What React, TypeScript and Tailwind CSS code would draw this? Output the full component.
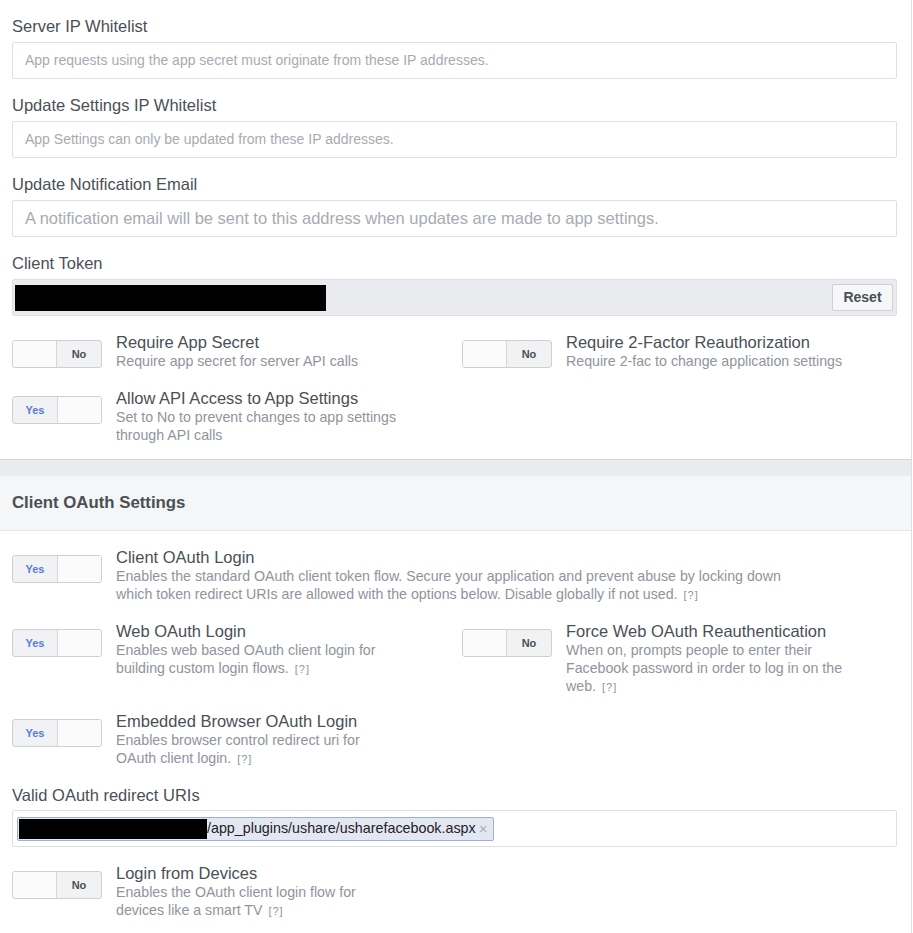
import React from 'react';

type ToggleProps = { on: boolean };

function Toggle({ on }: ToggleProps) {
  return (
    <div className="flex h-[28px] w-[90px] shrink-0 overflow-hidden rounded-[3px] border border-[#ccd0d5] bg-[#f1f2f4]">
      {on ? (
        <>
          <div className="flex w-[44px] items-center justify-center text-[11px] font-bold text-[#5b7bd5]">Yes</div>
          <div className="flex-1 border-l border-[#d3d6db] bg-[#fbfbfc]" />
        </>
      ) : (
        <>
          <div className="w-[44px] border-r border-[#d3d6db] bg-[#fbfbfc]" />
          <div className="flex flex-1 items-center justify-center text-[11px] font-bold text-[#4b4f56]">No</div>
        </>
      )}
    </div>
  );
}

function Help() {
  return <span className="ml-[6px] text-[11px] leading-none tracking-[1px] text-[#90949c]">[?]</span>;
}

interface SwitchRowProps {
  on: boolean;
  title: string;
  desc: React.ReactNode;
  wide?: boolean;
}

function SwitchRow({ on, title, desc, wide }: SwitchRowProps) {
  return (
    <div className="flex items-start">
      <div className="mt-[8px]">
        <Toggle on={on} />
      </div>
      <div className={`ml-[14px] ${wide ? 'w-[700px]' : 'w-[283px]'}`}>
        <div className="whitespace-nowrap text-[16.5px] leading-[20px] text-[#4b4f56]">{title}</div>
        <div className="text-[14.2px] leading-[18px] text-[#90949c]">{desc}</div>
      </div>
    </div>
  );
}

function Field({ label, tight, children }: { label: string; tight?: boolean; children: React.ReactNode }) {
  return (
    <div>
      <div className={`${tight ? 'mb-[5px]' : 'mb-[6px]'} text-[16.5px] leading-[20px] text-[#4b4f56]`}>{label}</div>
      {children}
    </div>
  );
}

function TextBox({ placeholder, big }: { placeholder: string; big?: boolean }) {
  return (
    <div
      className={`flex h-[37px] items-center whitespace-nowrap rounded-[2px] border border-[#dddfe2] bg-white px-3 text-[#a7abb1] ${
        big ? 'text-[16.5px]' : 'text-[14px]'
      }`}
    >
      {placeholder}
    </div>
  );
}

export default function App() {
  return (
    <div className="min-h-[933px] w-[913px] bg-white font-['Liberation_Sans',Arial,sans-serif]">
      <div className="w-[912px] border-r border-[#dddfe2]">
        {/* Advanced security */}
        <div className="flex flex-col gap-[16px] pb-[15px] pl-[12px] pr-[14px] pt-[16px]">
          <Field label="Server IP Whitelist">
            <TextBox placeholder="App requests using the app secret must originate from these IP addresses." />
          </Field>
          <Field label="Update Settings IP Whitelist">
            <TextBox placeholder="App Settings can only be updated from these IP addresses." />
          </Field>
          <Field label="Update Notification Email">
            <TextBox big placeholder="A notification email will be sent to this address when updates are made to app settings." />
          </Field>
          <Field label="Client Token">
            <div className="flex h-[37px] items-center justify-between rounded-[2px] border border-[#dddfe2] bg-[#e9ebee] pl-[2px] pr-[3px]">
              <div className="h-[26px] w-[311px] bg-black" />
              <button className="flex h-[27px] w-[61px] items-center justify-center rounded-[2px] border border-[#ced0d4] bg-[#f6f7f9] text-[14px] font-bold text-[#4b4f56]">
                Reset
              </button>
            </div>
          </Field>

          <div className="flex flex-col gap-[18px]">
            <div className="grid grid-cols-[450px_1fr]">
              <SwitchRow on={false} title="Require App Secret" desc="Require app secret for server API calls" />
              <SwitchRow on={false} title="Require 2-Factor Reauthorization" desc="Require 2-fac to change application settings" />
            </div>
            <SwitchRow
              on
              title="Allow API Access to App Settings"
              desc="Set to No to prevent changes to app settings through API calls"
            />
          </div>
        </div>

        {/* Section header */}
        <div className="h-[17px] border-t border-[#d3d6db] bg-[#e9ebee]" />
        <div className="flex h-[55px] items-center border-b border-[#e5e6e9] bg-[#f5f6f7] px-[12px] text-[16.8px] font-bold text-[#4b4f56]">
          Client OAuth Settings
        </div>

        {/* OAuth settings */}
        <div className="flex flex-col pb-[20px] pl-[12px] pr-[14px] pt-[16px]">
          <SwitchRow
            on
            wide
            title="Client OAuth Login"
            desc={
              <>
                Enables the standard OAuth client token flow. Secure your application and prevent abuse by locking down
                which token redirect URIs are allowed with the options below. Disable globally if not used.
                <Help />
              </>
            }
          />
          <div className="mt-[18px] grid grid-cols-[450px_1fr]">
            <SwitchRow
              on
              title="Web OAuth Login"
              desc={
                <>
                  Enables web based OAuth client login for building custom login flows.
                  <Help />
                </>
              }
            />
            <SwitchRow
              on={false}
              title="Force Web OAuth Reauthentication"
              desc={
                <>
                  When on, prompts people to enter their Facebook password in order to log in on the web.
                  <Help />
                </>
              }
            />
          </div>
          <div className="mt-[16px]">
            <SwitchRow
              on
              title="Embedded Browser OAuth Login"
              desc={
                <>
                  Enables browser control redirect uri for OAuth client login.
                  <Help />
                </>
              }
            />
          </div>
          <div className="mt-[18px]">
            <Field tight label="Valid OAuth redirect URIs">
              <div className="flex h-[37px] items-center rounded-[2px] border border-[#dddfe2] bg-white px-[4px]">
                <div className="flex h-[24px] items-center rounded-[2px] border border-[#9cb0d6] bg-[#e3e7f1] pl-[1px] pr-[6px] text-[14.3px] text-[#1d2129]">
                  <div className="h-[20px] w-[188px] bg-black" />
                  <span>/app_plugins/ushare/usharefacebook.aspx</span>
                  <span className="ml-[3px] text-[15px] leading-none text-[#a9aeb6]">×</span>
                </div>
              </div>
            </Field>
          </div>
          <div className="mt-[16px]">
            <SwitchRow
              on={false}
              title="Login from Devices"
              desc={
                <>
                  Enables the OAuth client login flow for devices like a smart TV
                  <Help />
                </>
              }
            />
          </div>
        </div>
      </div>
    </div>
  );
}
